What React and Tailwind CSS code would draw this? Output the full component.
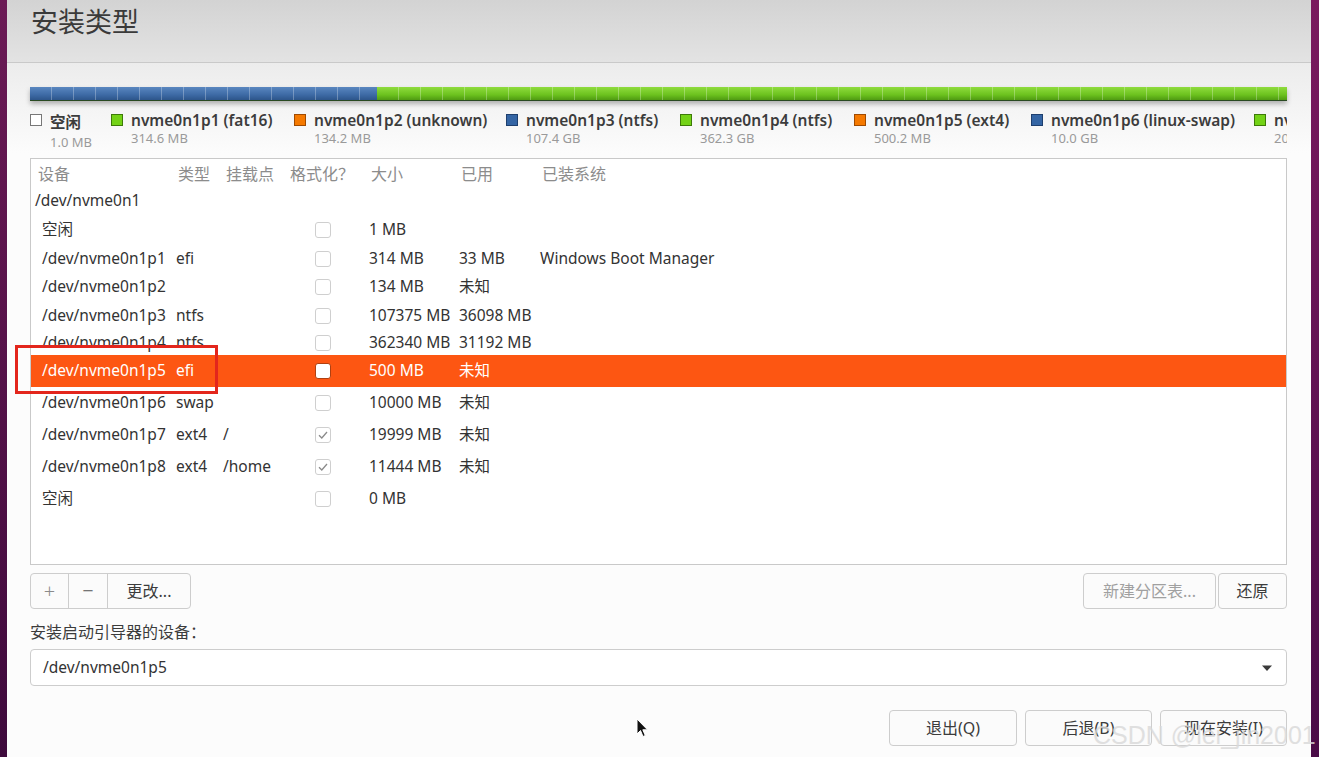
import React from "react";

const FONT = { fontFamily: '"Noto Sans", "Noto Sans CJK SC", sans-serif' };
const CJK = "font-[family-name:'Noto_Sans_CJK_SC',sans-serif]";

function Check({ checked, white }) {
  return (
    <div
      className={
        "w-[16px] h-[16px] rounded-[3px] border flex items-center justify-center " +
        (white ? "bg-white border-[#b04010]" : "bg-white border-[#cfcfcf]")
      }
    >
      {checked && (
        <svg width="12" height="12" viewBox="0 0 12 12">
          <path d="M2 6.2 L4.8 9 L10 3" fill="none" stroke="#8a8a8a" strokeWidth="1.3" />
        </svg>
      )}
    </div>
  );
}

const rows = [
  { dev: "空闲", size: "1 MB", h: "h-[29px]" },
  { dev: "/dev/nvme0n1p1", type: "efi", size: "314 MB", used: "33 MB", sys: "Windows Boot Manager", h: "h-[29px]" },
  { dev: "/dev/nvme0n1p2", size: "134 MB", used: "未知", h: "h-[28px]" },
  { dev: "/dev/nvme0n1p3", type: "ntfs", size: "107375 MB", used: "36098 MB", h: "h-[29px]" },
  { dev: "/dev/nvme0n1p4", type: "ntfs", size: "362340 MB", used: "31192 MB", h: "h-[25px]" },
  { dev: "/dev/nvme0n1p5", type: "efi", size: "500 MB", used: "未知", h: "h-[32px]", sel: true },
  { dev: "/dev/nvme0n1p6", type: "swap", size: "10000 MB", used: "未知", h: "h-[32px]" },
  { dev: "/dev/nvme0n1p7", type: "ext4", mount: "/", size: "19999 MB", used: "未知", checked: true, h: "h-[32px]" },
  { dev: "/dev/nvme0n1p8", type: "ext4", mount: "/home", size: "11444 MB", used: "未知", checked: true, h: "h-[32px]" },
  { dev: "空闲", size: "0 MB", h: "h-[32px]" },
];

const legend = [
  { name: "空闲", size: "1.0 MB", w: "w-[81px]", sq: "bg-white border-[#777]", free: true },
  { name: "nvme0n1p1 (fat16)", size: "314.6 MB", w: "w-[183px]", sq: "bg-[#73d216] border-[#3d7a08]" },
  { name: "nvme0n1p2 (unknown)", size: "134.2 MB", w: "w-[212px]", sq: "bg-[#f57900] border-[#a04a00]" },
  { name: "nvme0n1p3 (ntfs)", size: "107.4 GB", w: "w-[174px]", sq: "bg-[#3465a4] border-[#1e3f6e]" },
  { name: "nvme0n1p4 (ntfs)", size: "362.3 GB", w: "w-[174px]", sq: "bg-[#73d216] border-[#3d7a08]" },
  { name: "nvme0n1p5 (ext4)", size: "500.2 MB", w: "w-[177px]", sq: "bg-[#f57900] border-[#a04a00]" },
  { name: "nvme0n1p6 (linux-swap)", size: "10.0 GB", w: "w-[223px]", sq: "bg-[#3465a4] border-[#1e3f6e]" },
  { name: "nvme0n1p7 (ext4)", size: "20.0 GB", w: "w-[200px]", sq: "bg-[#73d216] border-[#3d7a08]" },
];

function Btn({ children, className = "", disabled }) {
  return (
    <div
      className={
        "h-[36px] flex items-center justify-center border border-[#cdcdcd] rounded-[4px] bg-[#fbfbfb] text-[16px] " +
        (disabled ? "text-[#a0a0a0] " : "text-[#3c3c3c] ") +
        className
      }
    >
      {children}
    </div>
  );
}

export default function App() {
  return (
    <div className="w-[1319px] h-[757px] flex overflow-hidden relative" style={FONT}>
      <div className="w-[7px] h-full bg-[linear-gradient(180deg,#6b1a55,#3e0a3c)]" />
      <div className="flex-1 h-full flex flex-col bg-[#fcfcfc] min-w-0">
        {/* header */}
        <div className="h-[63px] shrink-0 bg-[linear-gradient(180deg,#d3d3d3,#e3e3e3)] border-b border-[#c9c9c9] pl-[24px] pt-[3px]">
          <div className="text-[27px] leading-[38px] text-[#3a3a3a]">安装类型</div>
        </div>
        <div className="flex-1 flex flex-col pl-[23px] pr-[24px] bg-[linear-gradient(180deg,#ececec_0px,#fcfcfc_90px,#fcfcfc_100%)]">
          {/* partition bar */}
          <div className="mt-[24px] h-[14px] flex shadow-[0_3px_5px_rgba(0,0,0,0.28)] border-b border-[#2a4a22]">
            <div className="w-[347px] h-full bg-[repeating-linear-gradient(90deg,transparent_0px,transparent_21px,rgba(255,255,255,0.28)_21px,rgba(255,255,255,0.28)_22px),linear-gradient(180deg,#5a87c0,#3d6aa5_60%,#2d558a)]" />
            <div className="flex-1 h-full bg-[repeating-linear-gradient(90deg,transparent_0px,transparent_21px,rgba(255,255,255,0.28)_21px,rgba(255,255,255,0.28)_22px),linear-gradient(180deg,#8fdc3e,#6cc21e_60%,#4f9a12)]" />
          </div>
          {/* legend */}
          <div className="h-[57px] shrink-0 flex pt-[11px] overflow-hidden">
            {legend.map((l, i) => (
              <div key={i} className={"shrink-0 flex " + l.w}>
                <div className={"w-[12px] h-[12px] border mt-[2px] mr-[8px] shrink-0 " + l.sq} />
                <div className={"flex flex-col " + (l.free ? "pt-[2px]" : "")}>
                  <div className="text-[15.5px] leading-[17px] font-semibold text-[#3c3c3c] whitespace-nowrap">{l.name}</div>
                  <div className={"text-[13px] leading-[18px] text-[#9a9a9a] whitespace-nowrap " + (l.free ? "mt-[2px]" : "")}>{l.size}</div>
                </div>
              </div>
            ))}
          </div>
          {/* table */}
          <div className="h-[407px] shrink-0 border border-[#c9c9c9] bg-white flex flex-col overflow-hidden">
            <div className={"h-[28px] shrink-0 flex items-center text-[16px] text-[#8c8c8c] " + CJK}>
              <div className="w-[147px] pl-[7px]">设备</div>
              <div className="w-[48px]">类型</div>
              <div className="w-[64px]">挂载点</div>
              <div className="w-[81px]">格式化？</div>
              <div className="w-[90px]">大小</div>
              <div className="w-[81px]">已用</div>
              <div>已装系统</div>
            </div>
            <div className="h-[28px] shrink-0 flex items-center pl-[4px] text-[15.5px] text-[#333]">/dev/nvme0n1</div>
            {rows.map((r, i) => (
              <div
                key={i}
                className={
                  "shrink-0 flex items-center text-[15.5px] overflow-hidden " +
                  r.h +
                  (r.sel ? " bg-[#fd5612] text-white" : " text-[#333]")
                }
              >
                <div className="w-[145px] pl-[11px] whitespace-nowrap">{r.dev}</div>
                <div className="w-[47px]">{r.type}</div>
                <div className="w-[67px]">{r.mount}</div>
                <div className="w-[79px] pl-[25px]">
                  <Check checked={r.checked} white={r.sel} />
                </div>
                <div className="w-[90px] whitespace-nowrap">{r.size}</div>
                <div className="w-[81px] whitespace-nowrap">{r.used}</div>
                <div className="whitespace-nowrap">{r.sys}</div>
              </div>
            ))}
          </div>
          {/* buttons row */}
          <div className="mt-[8px] h-[36px] flex justify-between shrink-0">
            <div className="flex h-[36px] border border-[#cdcdcd] rounded-[4px] bg-[#fbfbfb] text-[16px] text-[#3c3c3c]">
              <div className="w-[38px] flex items-center justify-center border-r border-[#cdcdcd] text-[20px] text-[#8a8a8a] font-light">+</div>
              <div className="w-[39px] flex items-center justify-center border-r border-[#cdcdcd] text-[20px] text-[#555] font-light">−</div>
              <div className="w-[82px] flex items-center justify-center">更改...</div>
            </div>
            <div className="flex gap-[2px]">
              <Btn className="w-[133px]" disabled>新建分区表...</Btn>
              <Btn className="w-[69px]">还原</Btn>
            </div>
          </div>
          <div className={"mt-[11px] text-[16px] leading-[22px] text-[#3c3c3c] " + CJK}>安装启动引导器的设备：</div>
          <div className="mt-[7px] h-[37px] shrink-0 border border-[#cdcdcd] rounded-[4px] bg-white flex items-center justify-between pl-[12px] pr-[13px] text-[15.5px] text-[#333]">
            <span>/dev/nvme0n1p5</span>
            <svg width="12" height="8" viewBox="0 0 12 8">
              <path d="M1 1.5 L11 1.5 L6 7 Z" fill="#3a3a3a" />
            </svg>
          </div>
          <div className="mt-[24px] flex justify-end gap-[8px]">
            <Btn className="w-[128px]">退出(Q)</Btn>
            <Btn className="w-[127px]">后退(B)</Btn>
            <Btn className="w-[127px]">现在安装(I)</Btn>
          </div>
        </div>
      </div>
      <div className="w-[8px] h-full bg-[linear-gradient(180deg,#7a1a5e,#4a0c48)]" />

      {/* red annotation box */}
      <div className="absolute left-[15px] top-[345px] w-[203px] h-[49px] border-[3px] border-[#e3261c] pointer-events-none" />

      {/* cursor */}
      <svg className="absolute left-[636px] top-[718px]" width="13" height="20" viewBox="0 0 13 20">
        <path d="M1 1 L1 16 L4.5 12.5 L7 18.5 L9.3 17.5 L6.8 11.8 L11.5 11.8 Z" fill="#111" stroke="#fff" strokeWidth="1" />
      </svg>

      {/* watermark */}
      <div className="absolute left-[1093px] top-[720px] text-[25px] leading-[30px] text-[#d9d9d9] opacity-80 whitespace-nowrap" style={{ fontFamily: '"Liberation Sans", sans-serif' }}>
        CSDN @lei_jin2001
      </div>
    </div>
  );
}
